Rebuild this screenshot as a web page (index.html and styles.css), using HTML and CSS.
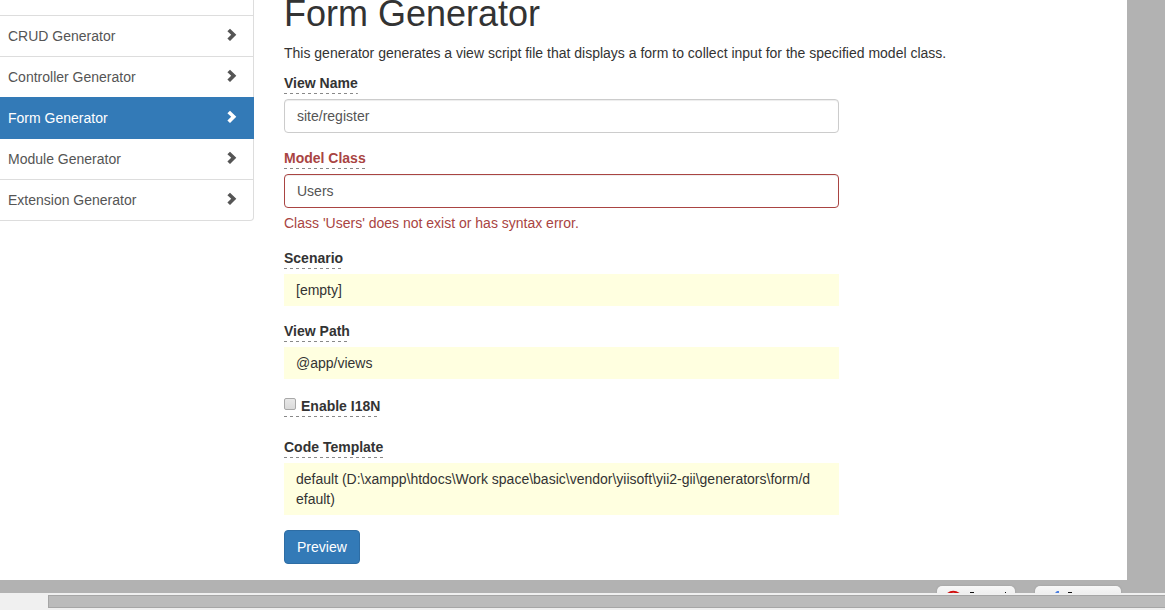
FILE: index.html
```html
<!DOCTYPE html>
<html lang="en">
<head>
<meta charset="utf-8">
<title>Form Generator</title>
<link rel="stylesheet" href="styles.css">
</head>
<body>
<div class="screen">
  <div class="page">
    <nav class="menu" aria-label="Generators">
      <div class="menu-item menu-item-cut"></div>
      <a class="menu-item" href="#crud">CRUD Generator <svg class="chevron" viewBox="0 0 10 14"><path d="M3 0.7 9.300 6.800 3 12.900 0.400 10.400 4.200 6.800 0.400 3.200z"/></svg></a>
      <a class="menu-item" href="#controller">Controller Generator <svg class="chevron" viewBox="0 0 10 14"><path d="M3 0.7 9.300 6.800 3 12.900 0.400 10.400 4.200 6.800 0.400 3.200z"/></svg></a>
      <a class="menu-item active" href="#form">Form Generator <svg class="chevron" viewBox="0 0 10 14"><path d="M3 0.7 9.300 6.800 3 12.900 0.400 10.400 4.200 6.800 0.400 3.200z"/></svg></a>
      <a class="menu-item" href="#module">Module Generator <svg class="chevron" viewBox="0 0 10 14"><path d="M3 0.7 9.300 6.800 3 12.900 0.400 10.400 4.200 6.800 0.400 3.200z"/></svg></a>
      <a class="menu-item" href="#extension">Extension Generator <svg class="chevron" viewBox="0 0 10 14"><path d="M3 0.7 9.300 6.800 3 12.900 0.400 10.400 4.200 6.800 0.400 3.200z"/></svg></a>
    </nav>
    <main class="content">
      <h1 class="title">Form Generator</h1>
      <p class="intro">This generator generates a view script file that displays a form to collect input for the specified model class.</p>
      <form class="form">
        <div class="group">
          <label class="label" for="view-name">View Name</label>
          <input class="control" id="view-name" type="text" value="site/register">
        </div>
        <div class="group has-error">
          <label class="label" for="model-class">Model Class</label>
          <input class="control" id="model-class" type="text" value="Users">
          <div class="help">Class 'Users' does not exist or has syntax error.</div>
        </div>
        <div class="group">
          <span class="label">Scenario</span>
          <div class="sticky">[empty]</div>
        </div>
        <div class="group">
          <span class="label">View Path</span>
          <div class="sticky">@app/views</div>
        </div>
        <div class="group group-check">
          <label class="label" for="i18n"><input class="check" id="i18n" type="checkbox"> Enable I18N</label>
        </div>
        <div class="group">
          <span class="label">Code Template</span>
          <div class="sticky">default (D:\xampp\htdocs\Work space\basic\vendor\yiisoft\yii2-gii\generators\form/d<br>efault)</div>
        </div>
        <button class="preview" type="button">Preview</button>
      </form>
    </main>
  </div>
  <div class="dock">
    <button class="tab tab-cancel" type="button" aria-label="Cancel"><svg class="tab-art" viewBox="0 0 78 8"><path d="M10 8.500Q16 3 23 8.500" fill="none" stroke="#d01010" stroke-width="2"/><path d="M33 6.500h4M68 6.500h1" stroke="#111"/></svg></button>
    <button class="tab tab-save" type="button" aria-label="Save"><svg class="tab-art" viewBox="0 0 86 8"><path d="M19 8 22 5h2V8z" fill="#4c7fe0"/><path d="M33 6.500h4" stroke="#111"/></svg></button>
  </div>
  <div class="scrollbar"><div class="thumb"></div></div>
</div>
</body>
</html>
```

FILE: styles.css
```css
* { box-sizing: border-box; }

body {
  margin: 0;
  background: #fff;
  color: #333;
  font: 14px/20px "Liberation Sans", Arial, sans-serif;
  overflow: hidden;
}

.screen { background: #b2b2b2; }

.page {
  display: flex;
  gap: 30px;
  margin-right: 38px;
  padding-bottom: 16px;
  background: #fff;
}

.menu {
  flex: none;
  width: 254px;
}

.menu-item {
  display: flex;
  justify-content: space-between;
  height: 42px;
  margin-bottom: -1px;
  padding: 10px 16px 10px 8px;
  border: solid #ddd;
  border-width: 1px 1px 1px 0;
  color: #555;
  text-decoration: none;
}

.menu-item-cut {
  height: 16px;
  padding: 0;
  border-top: 0;
}

.menu-item:last-child { border-bottom-right-radius: 4px; }

.active {
  position: relative;
  border-color: #337ab7;
  background: #337ab7;
  color: #fff;
}

.chevron {
  width: 10px;
  height: 14px;
  margin-top: 2px;
  fill: currentColor;
}

.content {
  flex: 1;
  min-width: 0;
}

.title {
  margin: 0 0 15px;
  font-size: 36px;
  font-weight: 500;
  line-height: 28px;
}

.intro { margin: 0 0 10px; }

.form { width: 66%; max-width: 555px; }

.group {
  display: flex;
  flex-direction: column;
  align-items: flex-start;
  margin-bottom: 15px;
}

.label {
  margin-bottom: 5px;
  padding-bottom: 1px;
  background: repeating-linear-gradient(90deg, #888 0 3px, transparent 3px 6px) bottom / 100% 1px no-repeat;
  font-weight: 700;
}

.control {
  width: 100%;
  height: 34px;
  padding: 6px 12px;
  border: 1px solid #ccc;
  border-radius: 4px;
  background: #fff;
  box-shadow: inset 0 1px 1px rgba(0, 0, 0, .075);
  color: #555;
  font: inherit;
}

.has-error .label,
.help { color: #a94442; }

.has-error .control { border-color: #a94442; }

.help { margin-top: 5px; }

.sticky {
  width: 100%;
  padding: 6px 12px;
  background: #ffffe0;
  word-break: break-all;
}

.group-check { padding-top: 2px; }

.group-check .label {
  display: flex;
  gap: 5px;
}

.check {
  appearance: none;
  width: 12px;
  height: 12px;
  margin: 2px 0 0;
  border: 1px solid #a8a8a8;
  border-radius: 2px;
  background: linear-gradient(#e8e8e8, #dadada);
}

.preview {
  display: block;
  height: 34px;
  padding: 6px 12px;
  border: 1px solid #2e6da4;
  border-radius: 4px;
  background: #337ab7;
  color: #fff;
  font: inherit;
}

.dock {
  display: flex;
  justify-content: flex-end;
  gap: 20px;
  height: 13px;
  padding: 6px 44px 0 0;
  overflow: hidden;
}

.tab {
  height: 24px;
  padding: 0;
  border: 0;
  border-radius: 5px;
  background: linear-gradient(#f8f8f8, #ececec 10px);
  box-shadow: 0 0 2px #999;
}

.tab-cancel { width: 78px; }
.tab-save { width: 86px; }

.tab-art {
  display: block;
  width: 100%;
  height: 8px;
  margin-bottom: 16px;
}

.scrollbar {
  padding: 2px 0 2px 48px;
  background: #f0f0f0;
}

.thumb {
  height: 13px;
  border: solid #a6a6a6;
  border-width: 1px 0 1px 1px;
  background: #bbb;
}
```
